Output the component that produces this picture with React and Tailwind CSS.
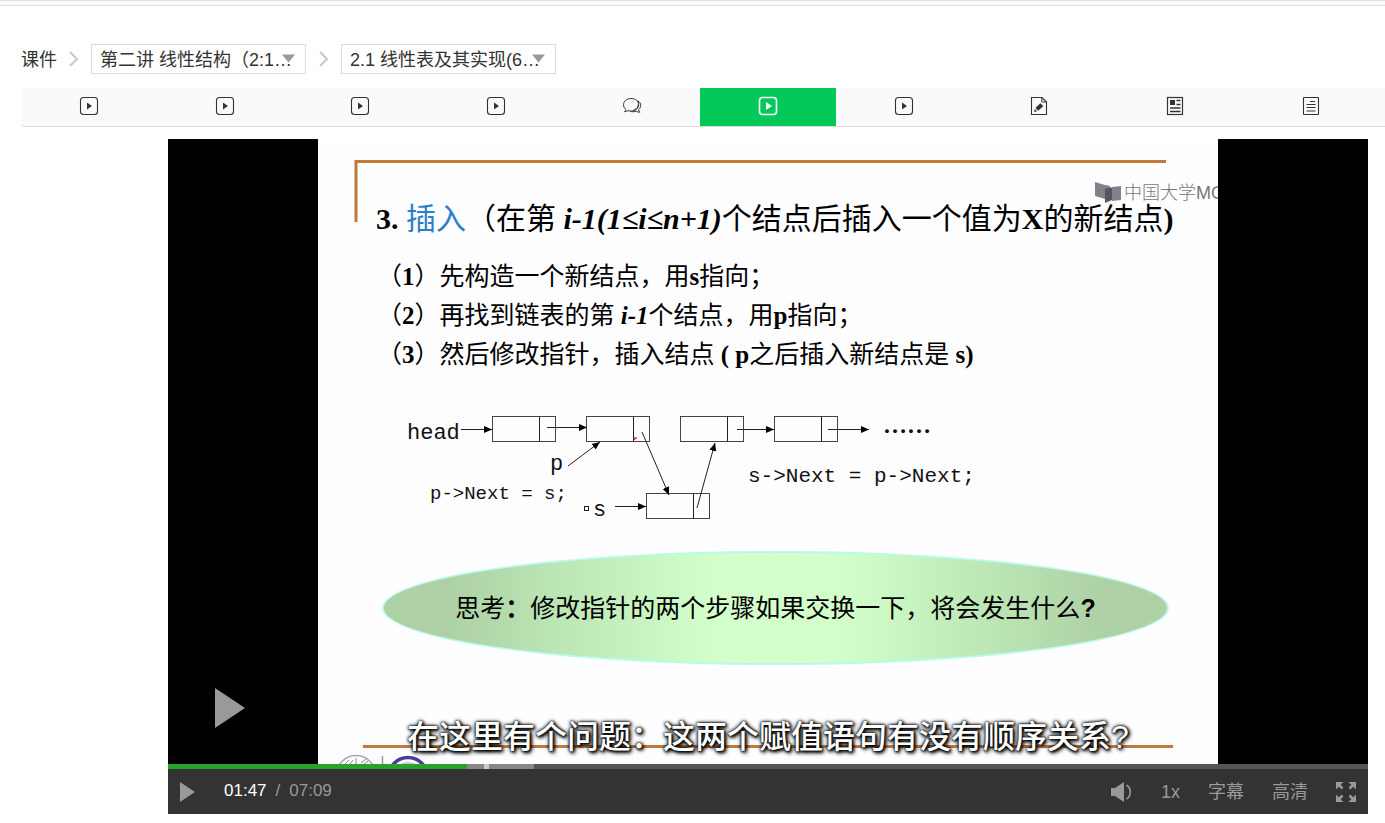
import React from "react";

const SANS = "font-['Liberation_Sans','Noto_Sans_CJK_SC',sans-serif]";
const SERIF = "font-['Liberation_Serif','Noto_Sans_CJK_SC',serif]";

function PlayBoxIcon({ strong }) {
  return (
    <svg width="20" height="20" viewBox="0 0 20 20" fill="none" aria-hidden="true">
      <rect x="1.5" y="1.5" width="17" height="17" rx="3" stroke="currentColor" strokeWidth={strong ? 1.6 : 1.1} />
      {strong ? <path d="M8 6l6 4-6 4z" fill="currentColor" /> : <path d="M8 6.500l5 3.500-5 3.500z" fill="currentColor" />}
    </svg>
  );
}

function ChatIcon() {
  return (
    <svg width="20" height="20" viewBox="0 0 20 20" fill="none" stroke="currentColor" aria-hidden="true">
      <path d="M9.200 2.500c-4.300 0-7.700 2.700-7.700 6.200 0 1.900.9 3.500 2.300 4.700-.1.9-.5 1.700-1.200 2.300 1.400 0 2.500-.4 3.400-1.100 1 .3 2.100.5 3.200.5 4.300 0 7.500-2.900 7.500-6.400S13.500 2.500 9.200 2.500z" />
      <path d="M15.800 4.800c1.800 1 2.900 2.600 2.900 4.600 0 1.900-.8 3.200-2.100 4.200.1 1.200.5 2 1.200 2.600-1.500.1-2.600-.3-3.500-1-1.700.6-4.300.7-6 .1M15.800 4.800c1.600 3.500.4 7.600-4.600 9.600" />
    </svg>
  );
}

function EditDocIcon() {
  return (
    <svg width="20" height="20" viewBox="0 0 20 20" fill="none" aria-hidden="true">
      <path d="M2.500 1.500h10.500l4.500 4.500v12.500h-15z" stroke="currentColor" strokeWidth="1.100" />
      <path d="M12.800 1.500v4.500h4.700" stroke="currentColor" />
      <path d="M11.300 7.300l3 2.800-5 4.600-2.900-2.600z" fill="currentColor" />
      <path d="M5.700 13l2.400 2.200-2.900.8z" fill="currentColor" />
    </svg>
  );
}

function NewsIcon() {
  return (
    <svg width="20" height="20" viewBox="0 0 20 20" fill="none" aria-hidden="true">
      <rect x="2.500" y="1.500" width="15" height="17" stroke="currentColor" strokeWidth="1.200" />
      <rect x="5" y="4" width="5" height="5" fill="currentColor" />
      <path d="M11.500 4.500h4M11.500 8.500h4" stroke="currentColor" strokeWidth="1.300" />
      <path d="M5 12h10.500M5 15.500h10.500" stroke="currentColor" strokeWidth="1.600" />
    </svg>
  );
}

function TextDocIcon() {
  return (
    <svg width="20" height="20" viewBox="0 0 20 20" fill="none" stroke="currentColor" aria-hidden="true">
      <rect x="2.500" y="1.500" width="15" height="17" rx="0.500" strokeWidth="1.100" />
      <path d="M9 5.500h5M5.500 8.500h9M5.500 11.500h9M5.500 15h9" />
    </svg>
  );
}

const UNITS = [
  { label: "视频 1", Icon: PlayBoxIcon },
  { label: "视频 2", Icon: PlayBoxIcon },
  { label: "视频 3", Icon: PlayBoxIcon },
  { label: "视频 4", Icon: PlayBoxIcon },
  { label: "讨论", Icon: ChatIcon },
  { label: "视频 5", Icon: PlayBoxIcon, active: true },
  { label: "视频 6", Icon: PlayBoxIcon },
  { label: "测验", Icon: EditDocIcon },
  { label: "文档", Icon: NewsIcon },
  { label: "富文本", Icon: TextDocIcon },
];

function Chevron() {
  return (
    <svg width="12" height="16" viewBox="0 0 12 16" fill="none" stroke="#c8c8c8" strokeWidth="2" aria-hidden="true">
      <path d="M2 1l7 7-7 7" />
    </svg>
  );
}

function Picker({ label, text }) {
  return (
    <div className="relative">
      <select
        aria-label={label}
        className="block h-[30px] w-[215px] cursor-pointer appearance-none border border-[#dcdcdc] bg-white pl-2 pt-px text-lg leading-7 text-[#333]"
      >
        <option>{text}</option>
      </select>
      <svg className="pointer-events-none absolute right-[10px] top-[10px]" width="15" height="9" viewBox="0 0 15 9" aria-hidden="true">
        <path d="M1 0.500h13l-6.500 8z" fill="#999" />
      </svg>
    </div>
  );
}

function Breadcrumb() {
  return (
    <nav aria-label="位置" className="flex items-center pl-[21px] text-lg leading-7 text-[#333]">
      <a href="#courseware" className="pt-px">课件</a>
      <span className="flex w-[34px] justify-center">
        <Chevron />
      </span>
      <Picker label="章节" text="第二讲 线性结构（2:1…" />
      <span className="flex w-[35px] justify-center">
        <Chevron />
      </span>
      <Picker label="课时" text="2.1 线性表及其实现(6…" />
    </nav>
  );
}

function UnitTabs() {
  return (
    <nav aria-label="单元" className="ml-[21px] mt-[14px] flex rounded-l border-b border-[#dcdcdc] bg-[#fafafa] pr-[6px]">
      {UNITS.map(({ label, Icon, active }) => (
        <a
          key={label}
          href="#unit"
          aria-label={label}
          className={
            active
              ? "flex h-[38px] flex-1 items-center justify-center bg-[#04c959] pb-[2px] text-white"
              : "flex h-[38px] flex-1 items-center justify-center pb-[2px] text-[#333]"
          }
        >
          <Icon strong={active} />
        </a>
      ))}
    </nav>
  );
}

function Arrow({ x1, y1, x2, y2 }) {
  return <line x1={x1} y1={y1} x2={x2} y2={y2} stroke="#222" markerEnd="url(#tip)" />;
}

function NodeBox({ x, y }) {
  return (
    <g fill="none" stroke="#444">
      <rect x={x} y={y} width="63" height="25" />
      <path d={`M${x + 47} ${y}v25`} stroke="#222" />
    </g>
  );
}

function ListDiagram() {
  return (
    <svg
      className="mt-[26px] block h-[130px] w-[900px] font-['Liberation_Mono',monospace]"
      viewBox="318 400 900 130"
      role="img"
      aria-label="链表插入结点示意图"
    >
      <defs>
        <marker id="tip" markerUnits="userSpaceOnUse" markerWidth="9" markerHeight="8" refX="8" refY="4" orient="auto">
          <path d="M0 0.500l8 3.500-8 3.500z" fill="#000" />
        </marker>
      </defs>
      <NodeBox x={492.5} y={416.5} />
      <NodeBox x={586.5} y={416.5} />
      <NodeBox x={680.5} y={416.5} />
      <NodeBox x={774.5} y={416.5} />
      <NodeBox x={646.5} y={493.5} />
      <Arrow x1={461} y1={429.5} x2={492} y2={429.5} />
      <Arrow x1={547} y1={427.5} x2={587} y2={427.5} />
      <Arrow x1={568} y1={466} x2={600} y2={442} />
      <Arrow x1={642} y1={432} x2={669} y2={495} />
      <Arrow x1={615} y1={506.5} x2={646} y2={506.5} />
      <Arrow x1={697} y1={508} x2={715} y2={443} />
      <Arrow x1={737} y1={429.5} x2={774} y2={429.5} />
      <Arrow x1={828} y1={429.5} x2={869} y2={429.5} />
      <path d="M634.500 440v-2h2.500" fill="none" stroke="#e0304f" strokeWidth="1.500" />
      <rect x="584.500" y="506.500" width="4" height="4" fill="none" stroke="#222" />
      <g fill="#111">
        <text x="407" y="439" fontSize="22">head</text>
        <text x="550" y="470" fontSize="22">p</text>
        <text x="430" y="499" fontSize="19">p-&gt;Next = s;</text>
        <text x="593" y="516" fontSize="22">s</text>
        <text x="748" y="482" fontSize="21">s-&gt;Next = p-&gt;Next;</text>
        <text x="883" y="433" fontSize="24" className="font-['Liberation_Serif',serif] font-bold">……</text>
      </g>
    </svg>
  );
}

function SlideFrame() {
  return (
    <svg className="absolute left-0 top-0" width="900" height="625" viewBox="318 139 900 625" fill="none" aria-hidden="true">
      <path d="M356 222V161.500H1166" stroke="#c07a3c" strokeWidth="3" />
      <path d="M363 746.500H1173" stroke="#c07a3c" strokeWidth="3" />
      <circle cx="356" cy="775" r="19.500" stroke="#aaa3bd" strokeWidth="1.500" />
      <path d="M345 764l4-4M350 764l3-4M356 758v6M361 763l5-4M364 764l4-3" stroke="#8d86a3" />
      <path d="M382.500 756v8" stroke="#9a94b8" strokeWidth="1.500" />
      <circle cx="408" cy="777" r="19.500" stroke="#453e9b" strokeWidth="3.500" />
      <circle cx="408" cy="777" r="14" stroke="#c3c9dc" strokeWidth="2" />
    </svg>
  );
}

function Watermark() {
  return (
    <div className={`absolute right-0 top-[40px] flex w-[123px] items-center gap-[3px] overflow-hidden whitespace-nowrap text-lg font-light text-[#777] ${SANS}`}>
      <svg className="shrink-0" width="26" height="22" viewBox="0 0 26 22" aria-hidden="true">
        <path d="M0 0l10 3c3 0 5 1 7 3v7l-7 4-10-3z" fill="#858087" />
        <path d="M17 5l9-1v14l-9 1z" fill="#858087" />
        <path d="M10 7c2-1 5-1 7-1v12l-7 3z" fill="#59555c" />
      </svg>
      <span>中国大学MO</span>
    </div>
  );
}

function Slide() {
  return (
    <article className={`relative h-[625px] w-[900px] shrink-0 overflow-hidden whitespace-nowrap bg-[#fefdff] pt-[60px] text-black ${SERIF}`}>
      <SlideFrame />
      <div className="relative">
        <h1 className="pl-[58px] text-[30px] leading-10">
          <b>3. </b>
          <span className="text-[#2a7fc9]">插入</span>（在第 <b className="italic">i-1(1≤i≤n+1)</b>
          个结点后插入一个值为<b>X</b>的新结点<b>)</b>
        </h1>
        <ol className="mt-[18px] pl-[59px] text-[25px] leading-[39px]">
          <li>（<b>1</b>）先构造一个新结点，用<b>s</b>指向；</li>
          <li>（<b>2</b>）再找到链表的第 <b className="italic">i-1</b>个结点，用<b>p</b>指向；</li>
          <li>（<b>3</b>）然后修改指针，插入结点 <b>( p</b>之后插入新结点是 <b>s)</b></li>
        </ol>
        <ListDiagram />
        <p className="ml-[64px] mt-[21px] flex h-[114px] w-[787px] items-center justify-center rounded-[50%] border-2 border-[#b9fbe9] bg-[linear-gradient(to_right,#add0a4_8%,#bfeab8_25%,#d2ffca_42%,#d2ffca_58%,#bfeab8_75%,#add0a4_92%)] pt-[2px] text-[25px]">
          <span>
            思考<b>：</b>修改指针的两个步骤如果交换一下，将会发生什么<b className={SANS}>?</b>
          </span>
        </p>
      </div>
      <Watermark />
    </article>
  );
}

function Stage() {
  return (
    <div className="relative flex justify-center overflow-hidden bg-black">
      <Slide />
      <p className="absolute inset-x-0 bottom-[3px] text-center text-[32px] font-medium leading-[48px] text-white [text-shadow:0_0_2px_#000,1px_1px_3px_#000,2px_2px_4px_#000,0_0_4px_#000]">
        在这里有个问题：这两个赋值语句有没有顺序关系?
      </p>
      <button type="button" aria-label="播放视频" className="absolute bottom-[36px] left-[47px]">
        <svg className="block" width="30" height="40" viewBox="0 0 30 40" aria-hidden="true">
          <path d="M0 0l30 20L0 40z" fill="#999" />
        </svg>
      </button>
    </div>
  );
}

function Progress() {
  return (
    <div className="relative flex h-[5px] bg-[#555]">
      <div className="w-[24.900%] bg-[#28a428]" />
      <div className="w-[5.600%] bg-[#888]" />
      <div className="absolute left-[26.300%] h-[5px] w-[5px] bg-[#ccc]" />
      <input
        type="range"
        aria-label="播放进度"
        min="0"
        max="429"
        defaultValue="107"
        className="absolute inset-0 h-full w-full cursor-pointer opacity-0"
      />
    </div>
  );
}

function Controls() {
  return (
    <div className="flex h-[45px] items-center bg-[#333] px-3 text-lg text-[#999]">
      <button type="button" aria-label="播放">
        <svg className="block" width="15" height="20" viewBox="0 0 15 20" fill="currentColor" aria-hidden="true">
          <path d="M0 0l15 10L0 20z" />
        </svg>
      </button>
      <div className="ml-[29px] flex gap-[9px] text-[17px]">
        <span className="text-white">01:47</span>
        <span>/</span>
        <span>07:09</span>
      </div>
      <div className="ml-auto flex items-center gap-7">
        <button type="button" aria-label="音量">
          <svg className="block" width="22" height="20" viewBox="0 0 22 20" fill="none" aria-hidden="true">
            <path d="M0 6h4l9-6v20l-9-6H0z" fill="currentColor" />
            <path d="M15.500 3c5 3 5 11 0 14" stroke="currentColor" strokeWidth="1.600" />
          </svg>
        </button>
        <button type="button">1x</button>
        <button type="button">字幕</button>
        <button type="button">高清</button>
        <button type="button" aria-label="全屏">
          <svg className="block" width="20" height="20" viewBox="0 0 20 20" fill="currentColor" stroke="currentColor" strokeWidth="2.600" aria-hidden="true">
            <path d="M0 0h7.500L0 7.500zM20 0h-7.500l7.500 7.500zM0 20h7.500l-7.500-7.500zM20 20h-7.500l7.500-7.500z" stroke="none" />
            <path d="M2 2l4.500 4.500M18 2l-4.500 4.500M2 18l4.500-4.500M18 18l-4.500-4.500" />
          </svg>
        </button>
      </div>
    </div>
  );
}

export default function App() {
  return (
    <div className={`bg-white text-[#333] ${SANS}`}>
      <div className="h-[6px] border-y border-[#dcdcdf] bg-[#fafafa]" />
      <header className="pt-[38px]">
        <Breadcrumb />
        <UnitTabs />
      </header>
      <main className="ml-[168px] mr-[17px] mt-3">
        <Stage />
        <Progress />
        <Controls />
      </main>
    </div>
  );
}
